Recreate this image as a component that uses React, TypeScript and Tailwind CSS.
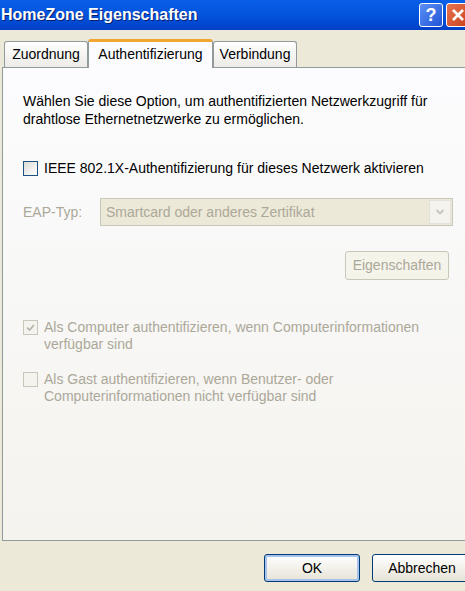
import React from "react";

const font = { fontFamily: '"Liberation Sans", Arial, sans-serif' };

function CheckBox({ checked, disabled }: { checked?: boolean; disabled?: boolean }) {
  return (
    <div
      className={
        "w-[15px] h-[15px] shrink-0 border flex items-center justify-center " +
        (disabled
          ? "border-[#c9c7ba] bg-[#f4f3ee]"
          : "border-[#1c5180] bg-gradient-to-br from-[#dcdcd7] to-[#ffffff]")
      }
    >
      {checked && (
        <svg width="11" height="11" viewBox="0 0 11 11">
          <path d="M2 5.5 L4.5 8 L9 3" fill="none" stroke="#b5b2a4" strokeWidth="1.6" />
        </svg>
      )}
    </div>
  );
}

export default function App() {
  return (
    <div
      className="w-[465px] h-[591px] overflow-hidden bg-[#ece9d8] flex flex-col text-[14px] text-black"
      style={font}
    >
      {/* Title bar */}
      <div className="h-[30px] shrink-0 flex items-center justify-between bg-gradient-to-b from-[#0a5fe8] via-[#0453dc] to-[#0040c8] relative">
        <div
          className="text-white font-bold text-[16px] pl-[1px]"
          style={{ fontFamily: '"Liberation Sans", Arial, sans-serif', textShadow: "1px 1px 0 #0a1e6e" }}
        >
          HomeZone Eigenschaften
        </div>
        <div className="flex items-center gap-[3px] mr-[-5px]">
          <div className="w-[24px] h-[24px] rounded-[3px] border border-white bg-gradient-to-br from-[#5d8ff3] to-[#1f55d8] flex items-center justify-center text-white font-bold text-[18px] leading-none">
            ?
          </div>
          <div className="w-[24px] h-[24px] rounded-[3px] border border-white bg-gradient-to-br from-[#e8744f] to-[#c6401b] flex items-center justify-center">
            <svg width="14" height="14" viewBox="0 0 14 14">
              <path d="M2 2 L12 12 M12 2 L2 12" stroke="white" strokeWidth="2.6" />
            </svg>
          </div>
        </div>
      </div>

      {/* Tabs */}
      <div className="flex items-end pl-[4px] mt-[9px] h-[28px] relative z-10">
        <div className="h-[26px] w-[84px] border border-[#919b9c] border-b-0 rounded-t-[3px] bg-gradient-to-b from-[#ffffff] to-[#ecebe6] flex items-center justify-center text-[14px]">
          Zuordnung
        </div>
        <div className="h-[29px] w-[125px] mb-[-1px] border border-[#919b9c] border-b-0 border-t-[3px] border-t-[#f0a630] rounded-t-[3px] bg-[#fcfcfe] flex items-center justify-center text-[14px] pb-[2px]">
          Authentifizierung
        </div>
        <div className="h-[26px] w-[84px] border border-[#919b9c] border-b-0 rounded-t-[3px] bg-gradient-to-b from-[#ffffff] to-[#ecebe6] flex items-center justify-center text-[14px]">
          Verbindung
        </div>
      </div>

      {/* Panel */}
      <div className="ml-[2px] w-[480px] h-[474px] shrink-0 border border-[#919b9c] bg-gradient-to-b from-[#fcfcfe] to-[#f4f3ee] pl-[20px] pt-[24px]">
        <div className="leading-[18px] w-[430px]">
          Wählen Sie diese Option, um authentifizierten Netzwerkzugriff für drahtlose Ethernetnetzwerke zu ermöglichen.
        </div>

        <div className="flex items-center gap-[6px] mt-[33px] h-[15px]">
          <CheckBox />
          <span>IEEE 802.1X-Authentifizierung für dieses Netzwerk aktivieren</span>
        </div>

        <div className="flex items-center mt-[22px] h-[28px]">
          <span className="text-[#aca899] w-[77px]">EAP-Typ:</span>
          <div className="w-[353px] h-[28px] border border-[#c9c7ba] bg-[#ece9d8] flex items-center justify-between pl-[5px] pr-[1px]">
            <span className="text-[#aca899]">Smartcard oder anderes Zertifikat</span>
            <div className="w-[22px] h-[24px] border border-[#e3e1d8] bg-[#f4f3ee] flex items-center justify-center">
              <svg width="10" height="8" viewBox="0 0 10 8">
                <path d="M1.5 2 L5 5.5 L8.5 2" fill="none" stroke="#c9c7ba" strokeWidth="1.8" />
              </svg>
            </div>
          </div>
        </div>

        <div className="flex mt-[25px] w-[426px] justify-end">
          <div className="w-[104px] h-[29px] rounded-[3px] border border-[#c9c7ba] bg-[#f5f4ea] text-[#aca899] flex items-center justify-center">
            Eigenschaften
          </div>
        </div>

        <div className="flex items-start gap-[6px] mt-[40px] text-[#aca899] leading-[17px]">
          <CheckBox checked disabled />
          <span className="mt-[-1px]">
            Als Computer authentifizieren, wenn Computerinformationen
            <br />
            verfügbar sind
          </span>
        </div>

        <div className="flex items-start gap-[6px] mt-[19px] text-[#aca899] leading-[17px]">
          <CheckBox disabled />
          <span className="mt-[-1px]">
            Als Gast authentifizieren, wenn Benutzer- oder
            <br />
            Computerinformationen nicht verfügbar sind
          </span>
        </div>
      </div>

      {/* Bottom buttons */}
      <div className="flex mt-[13px] pl-[264px] gap-[12px]">
        <div className="w-[96px] h-[28px] shrink-0 rounded-[3px] border border-[#003c74] bg-gradient-to-b from-[#ffffff] to-[#e6e3d6] flex items-center justify-center shadow-[inset_0_0_0_2px_#a8c2f0]">
          OK
        </div>
        <div className="w-[100px] h-[28px] shrink-0 rounded-[3px] border border-[#003c74] bg-gradient-to-b from-[#ffffff] to-[#e6e3d6] flex items-center justify-center">
          Abbrechen
        </div>
      </div>
    </div>
  );
}
